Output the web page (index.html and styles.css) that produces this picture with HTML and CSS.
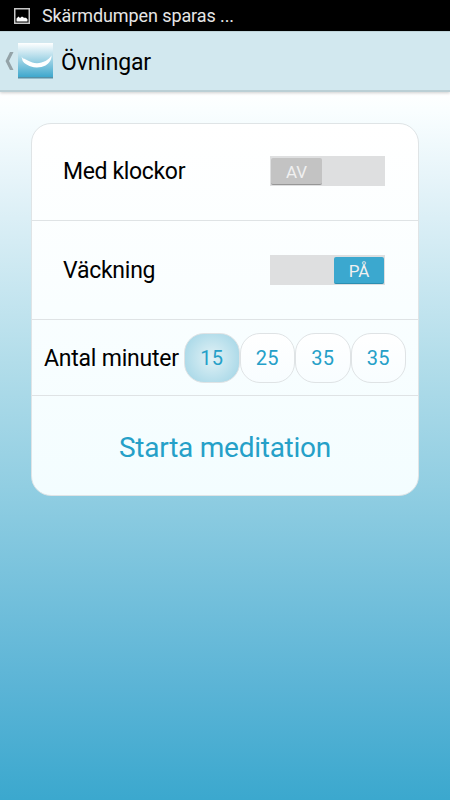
FILE: index.html
```html
<!DOCTYPE html>
<html lang="sv">
<head>
<meta charset="utf-8">
<title>Övningar</title>
<link rel="stylesheet" href="styles.css">
</head>
<body>
<div class="status">
  <svg class="shot" width="16" height="16" viewBox="0 0 16 16"><rect x=".75" y=".75" width="14.5" height="14.5" fill="none" stroke="#c8c8c8" stroke-width="1.5"/><path d="M2.500 13.500V10.500l2-2L6 10l2-1.500 2 1.300h2l1.500 1.500v2.200z" fill="#fff"/></svg>
  <span class="status-text">Skärmdumpen sparas ...</span>
</div>
<header class="bar">
  <svg class="back" width="9" height="18" viewBox="0 0 9 18"><path d="M5 0H8.500L4 9l4.500 9H5L.5 9z" fill="#94a3a8"/></svg>
  <svg class="logo" width="35" height="36" viewBox="0 0 35 36">
    <defs><linearGradient id="sky" x1="0" y1="0" x2="0" y2="1"><stop offset="0" stop-color="#fff"/><stop offset=".3" stop-color="#c5e4ef"/><stop offset="1" stop-color="#39a5cb"/></linearGradient></defs>
    <rect width="35" height="35" fill="url(#sky)"/><rect y="34" width="35" height="1.500" fill="#568fa5"/>
    <path d="M3.500 13.500L5 15.500c4 .5 7 4.700 14 4.800 6-.5 12-3 14.500-8 .3 4-2 8-6 10.300-4 2-10 2.500-14.500 1C9 22 5 19.500 4.500 17.500z" fill="#fff"/>
  </svg>
  <h1 class="title">Övningar</h1>
</header>
<main class="page">
  <section class="card">
    <div class="row option"><span class="label bells">Med klockor</span><div class="switch"><span class="thumb">AV</span></div></div>
    <div class="row option"><span class="label wake">Väckning</span><div class="switch on"><span class="thumb">PÅ</span></div></div>
    <div class="row minutes"><span class="label count">Antal minuter</span>
      <div class="choices"><span class="choice selected">15</span><span class="choice">25</span><span class="choice">35</span><span class="choice">35</span></div>
    </div>
    <div class="start"><span>Starta meditation</span></div>
  </section>
</main>
</body>
</html>
```
FILE: styles.css
```css
* { box-sizing: border-box; }
body { margin: 0; width: 450px; height: 800px; overflow: hidden; display: flex; flex-direction: column; font-family: Roboto, "Liberation Sans", sans-serif; color: #000; background: #fff; }
.status { height: 31px; background: #000; display: flex; align-items: center; padding-left: 14px; flex: none; }
.shot { margin-right: 12px; }
.status-text { color: #e6e6e6; font-size: 18px; line-height: 30px; letter-spacing: -.1px; }
.bar { height: 61px; flex: none; background: #d2e8ef; border-top: 1px solid #bfd4da; border-bottom: 2px solid #bbcfd5; display: flex; align-items: center; padding-left: 5px; z-index: 1; box-shadow: 0 1px 3px rgba(0,0,0,.2); }
.back { margin-right: 4px; }
.logo { margin-right: 8px; }
.title { margin: 0; font-weight: 400; font-size: 23px; line-height: 30px; letter-spacing: -.15px; padding-top: 3px; }
.page { flex: 1; padding: 31px 31px 0; background: linear-gradient(#fff 0, #f9feff 20px, #e2f2f8 102px, #b2ddea 270px, #91cee2 395px, #5bb4d6 595px, #3ba8ce 708px); }
.card { width: 388px; height: 373px; border: 1px solid #dfe4e6; border-radius: 20px; background: linear-gradient(#fff, #f3fdff); overflow: hidden; }
.row { display: flex; align-items: center; border-bottom: 1px solid #dfe3e5; }
.option { height: 99px; justify-content: space-between; padding: 0 33px 0 31px; }
.option:first-child { height: 97px; padding-bottom: 2px; }
.label { font-size: 23px; white-space: nowrap; }
.bells { letter-spacing: -.35px; }
.wake { letter-spacing: -.25px; }
.count { letter-spacing: -.22px; padding-top: 2px; }
.switch { width: 115px; height: 30px; padding: 2px 1px 1px; background: #dedfe0; display: flex; }
.switch.on { justify-content: flex-end; }
.thumb { width: 51px; height: 27px; border-radius: 2px; background: #c3c3c3; border-bottom: 1px solid #969696; color: #f0f0f0; font-size: 17px; line-height: 28px; text-align: center; }
.on .thumb { width: 50px; background: #3ba8cf; border-color: #2b8eb1; }
.minutes { height: 76px; padding: 0 12px; justify-content: space-between; }
.choices { display: flex; }
.choice { width: 55.500px; height: 50px; border: 1px solid #dfe3e5; border-radius: 20px; background: linear-gradient(#fff, #f8fdff); color: #25a0c8; font-size: 20px; letter-spacing: .2px; line-height: 49px; text-align: center; }
.selected { background: radial-gradient(circle, #e2f2f6, #a6d7e7 32px); }
.start { height: 99px; display: flex; align-items: center; justify-content: center; color: #25a0c8; font-size: 28px; letter-spacing: -.25px; padding-top: 3px; }
```
